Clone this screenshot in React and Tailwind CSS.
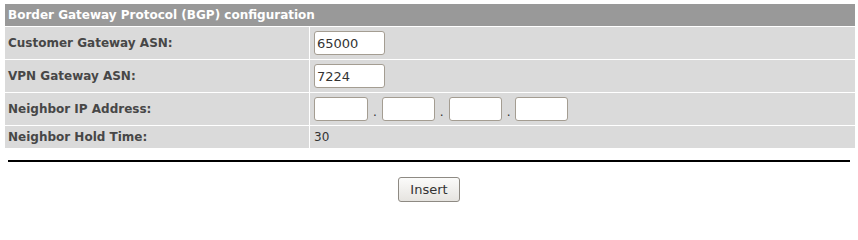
import React from 'react';

const font = { fontFamily: '"DejaVu Sans", Verdana, sans-serif' };

function Campo({ value, largura = 'w-[71px]' }) {
  return (
    <input
      type="text"
      defaultValue={value}
      className={`${largura} h-[24px] bg-white border border-[#a49d92] rounded-[3px] px-[2px] text-[13px] text-[#333] outline-none`}
      style={font}
    />
  );
}

function Linha({ rotulo, altura = 'h-[32px]', children }) {
  return (
    <div className={`flex gap-px ${altura}`}>
      <div className="w-[304px] bg-[#dadada] flex items-center px-[3px] text-[12px] font-bold text-[#474747]">
        {rotulo}
      </div>
      <div className="flex-1 bg-[#dadada] flex items-center px-[4px]">{children}</div>
    </div>
  );
}

export default function App() {
  return (
    <div className="w-[858px] h-[205px] bg-white pt-[4px] px-[3px]" style={font}>
      <div className="flex flex-col gap-px bg-white ml-[2px]">
        <div className="h-[22px] bg-[#999999] text-white text-[12px] font-bold flex items-center px-[3px]">
          Border Gateway Protocol (BGP) configuration
        </div>
        <Linha rotulo="Customer Gateway ASN:">
          <Campo value="65000" />
        </Linha>
        <Linha rotulo="VPN Gateway ASN:">
          <Campo value="7224" />
        </Linha>
        <Linha rotulo="Neighbor IP Address:">
          <div className="flex items-center gap-[5px]">
            <Campo largura="w-[54px]" />
            <span className="text-[12px] text-[#333] pt-[6px]">.</span>
            <Campo largura="w-[53px]" />
            <span className="text-[12px] text-[#333] pt-[6px]">.</span>
            <Campo largura="w-[53px]" />
            <span className="text-[12px] text-[#333] pt-[6px]">.</span>
            <Campo largura="w-[53px]" />
          </div>
        </Linha>
        <Linha rotulo="Neighbor Hold Time:" altura="h-[22px]">
          <span className="text-[12px] text-[#333]">30</span>
        </Linha>
      </div>
      <div className="mt-[12px] mx-[5px] h-[2px] bg-black" />
      <div className="flex justify-center mt-[15px]">
        <button
          className="h-[25px] px-[11px] text-[13px] text-[#333] border border-[#8e8a83] rounded-[3px] bg-gradient-to-b from-[#fbfbfa] to-[#e6e4e0]"
          style={font}
        >
          Insert
        </button>
      </div>
    </div>
  );
}
